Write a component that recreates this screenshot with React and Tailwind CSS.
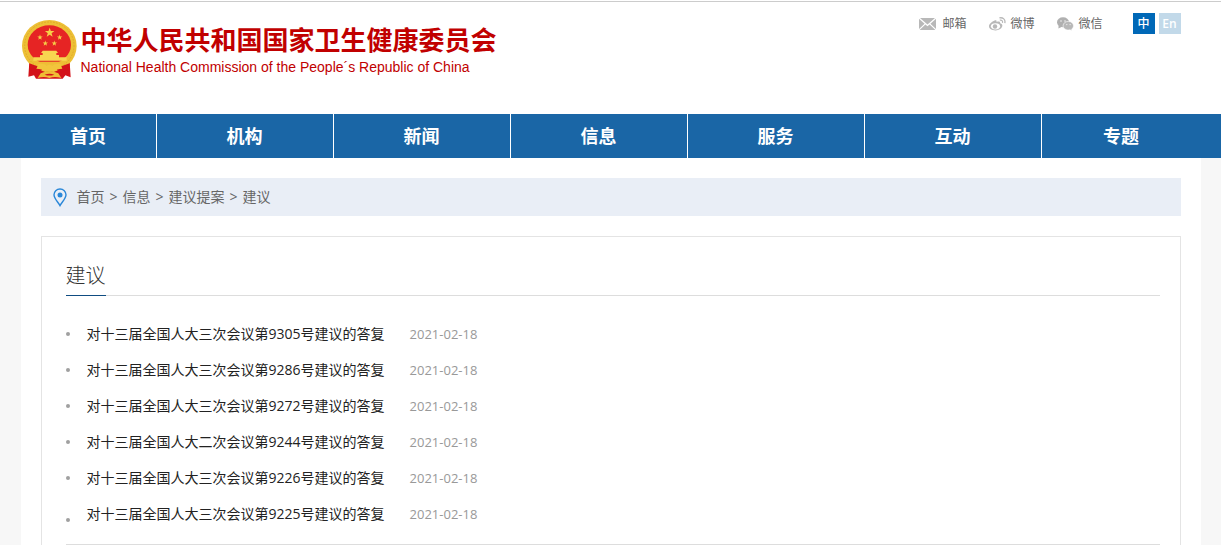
const NAV_ITEMS = ["首页", "机构", "新闻", "信息", "服务", "互动", "专题"];

const CRUMBS = ["首页", "信息", "建议提案", "建议"];

const ARTICLES = [
  { title: "对十三届全国人大三次会议第9305号建议的答复", date: "2021-02-18" },
  { title: "对十三届全国人大三次会议第9286号建议的答复", date: "2021-02-18" },
  { title: "对十三届全国人大三次会议第9272号建议的答复", date: "2021-02-18" },
  { title: "对十三届全国人大二次会议第9244号建议的答复", date: "2021-02-18" },
  { title: "对十三届全国人大三次会议第9226号建议的答复", date: "2021-02-18" },
  { title: "对十三届全国人大三次会议第9225号建议的答复", date: "2021-02-18" },
];

const STAR = "M0 -10 L2.4 -3.2 L9.5 -3.1 L3.8 1.2 L5.9 8.1 L0 4 L-5.9 8.1 L-3.8 1.2 L-9.5 -3.1 L-2.4 -3.2 Z";

function Emblem() {
  return (
    <svg viewBox="0 0 165 177" className="h-[59px] w-[55px] shrink-0" aria-hidden="true">
      {/* ribbons */}
      <path d="M22 126 L54 140 L82 146 L110 140 L143 126 L146 172 L130 166 L122 176 L42 176 L36 166 L19 170 Z" fill="#d3121a" />
      {/* wreath */}
      <ellipse cx="82" cy="78" rx="82" ry="78" fill="#edc036" />
      <ellipse cx="82" cy="77" rx="74" ry="71" fill="none" stroke="#e2a928" strokeWidth="3" strokeDasharray="5 4" />
      <ellipse cx="82" cy="74" rx="65" ry="58" fill="#e62424" />
      {/* stars */}
      <g fill="#f6cf48">
        <path d={STAR} transform="translate(83 38) scale(1.5)" />
        <path d={STAR} transform="translate(54 52) scale(.85)" />
        <path d={STAR} transform="translate(113 52) scale(.85)" />
        <path d={STAR} transform="translate(70 70) scale(.85)" />
        <path d={STAR} transform="translate(97 70) scale(.85)" />
      </g>
      {/* gate */}
      <g fill="#f8d650">
        <path d="M62 92 H103 L108 99 H57 Z" />
        <path d="M62 99 H103 V105 H62 Z" />
        <path d="M54 105 H111 V112 H134 V122 H34 V112 H54 Z" />
      </g>
      <path d="M32 125 H133 L124 132 H41 Z" fill="#efbc35" />
      {/* ribbon folds over the wreath */}
      <path d="M22 130 L44 138 L62 146 L52 160 L24 148 Z" fill="#d3121a" />
      <path d="M143 130 L120 138 L103 146 L112 160 L141 148 Z" fill="#d3121a" />
      {/* gear and knot */}
      <path d="M50 132 Q68 130 74 138 Q82 130 91 138 Q97 130 115 132 L121 146 Q104 146 95 156 Q82 148 70 156 Q60 146 43 146 Z" fill="#f2c53c" />
      <path d="M56 160 Q82 148 109 160 L118 174 Q98 168 82 174 Q66 168 47 174 Z" fill="#efbd34" />
      <path d="M68 164 Q82 158 97 164 Q82 169 68 164 Z" fill="#d3121a" />
    </svg>
  );
}

function MailIcon() {
  return (
    <svg viewBox="0 0 17 12" className="h-3 w-[17px] fill-[#b8b8b8]" aria-hidden="true">
      <path d="M1 0 H16 L8.5 6.6 Z" />
      <path d="M0 .8 L5.6 5.8 L0 11 Z" />
      <path d="M17 .8 L11.4 5.8 L17 11 Z" />
      <path d="M6.4 6.5 L8.5 8.3 L10.6 6.5 L16.4 12 H.6 Z" />
    </svg>
  );
}

function WeiboIcon() {
  return (
    <svg viewBox="0 0 17 14" className="h-3.5 w-[17px]" aria-hidden="true">
      <path
        d="M5.6 3.6 C7 3 7.9 3.4 7.5 5 C9.6 4.2 11.5 4.3 11.1 6.3 C13 6.8 13.8 8 13.2 9.6 C12.3 12.2 9.4 13.5 6.4 13.4 C3 13.3 0 11.8 0 9.2 C0 7.2 2.9 4.6 5.6 3.6 Z"
        fill="#b8b8b8"
      />
      <ellipse cx="6.5" cy="9.3" rx="4.6" ry="3.1" fill="#fff" />
      <circle cx="6" cy="9.5" r="2.2" fill="#b8b8b8" />
      <path d="M10.4 .9 C14 .1 16.7 2.6 15.8 6.2" fill="none" stroke="#b8b8b8" strokeWidth="1.3" />
      <path d="M10.8 3.2 C12.7 2.8 14 4 13.5 5.8" fill="none" stroke="#b8b8b8" strokeWidth="1.2" />
    </svg>
  );
}

function WechatIcon() {
  return (
    <svg viewBox="0 0 17 14" className="h-3.5 w-[17px]" aria-hidden="true">
      <g fill="#b0b0b0">
        <ellipse cx="6" cy="5.2" rx="6" ry="5" />
        <path d="M1.6 8 L1.4 11.4 L5 9.8 Z" />
      </g>
      <g fill="#b8b8b8" stroke="#fff" strokeWidth=".6">
        <path d="M11.3 4.4 C14.3 4.4 16.5 6.3 16.5 8.7 C16.5 10.1 15.8 11.3 14.7 12 L15 13.8 L13 12.8 C9 13.6 6.1 11.5 6.1 8.7 C6.1 6.3 8.4 4.4 11.3 4.4 Z" />
      </g>
      <g fill="#eee">
        <circle cx="4" cy="4" r=".8" />
        <circle cx="8" cy="4" r=".8" />
        <circle cx="9.8" cy="7.6" r=".7" />
        <circle cx="13.1" cy="7.6" r=".7" />
      </g>
    </svg>
  );
}

function PinIcon() {
  return (
    <svg viewBox="0 0 14 19" className="h-[19px] w-3.5 shrink-0" aria-hidden="true">
      <path
        d="M7 1 C3.6 1 1 3.5 1 6.8 C1 10.5 5 14 7 17.6 C9 14 13 10.5 13 6.8 C13 3.5 10.4 1 7 1 Z"
        fill="none"
        stroke="#2a87d8"
        strokeWidth="1.4"
      />
      <circle cx="7" cy="7" r="2.5" fill="#2a87d8" />
    </svg>
  );
}

function Header() {
  return (
    <header className="mt-px border-t border-[#ccc] bg-white">
      <div className="mx-auto flex h-28 max-w-[1180px] items-start justify-between pr-5 pl-px">
        <a href="#" className="mt-[18px] flex items-start gap-1 text-[#c10000]">
          <Emblem />
          <span className="flex flex-col pt-1">
            <span className="text-[26px] leading-8 font-bold whitespace-nowrap">
              中华人民共和国国家卫生健康委员会
            </span>
            <span className="font-['Liberation_Sans',sans-serif] text-sm leading-[22px] whitespace-nowrap">
              National Health Commission of the People´s Republic of China
            </span>
          </span>
        </a>

        <div className="mt-[11px] flex items-center text-xs text-[#666]">
          <div className="mr-[30px] flex items-center gap-[23px]">
            <a href="#" className="flex items-center gap-1.5">
              <MailIcon />
              邮箱
            </a>
            <a href="#" className="flex items-center gap-1">
              <WeiboIcon />
              微博
            </a>
            <a href="#" className="flex items-center gap-1">
              <WechatIcon />
              微信
            </a>
          </div>
          <div className="flex gap-1 text-center leading-[21px] font-medium text-white">
            <a href="#" className="w-[22px] bg-[#0068b7]">中</a>
            <a href="#" className="w-[22px] bg-[#c2d9e9] font-semibold">En</a>
          </div>
        </div>
      </div>
    </header>
  );
}

function Nav() {
  return (
    <nav className="bg-[#1a66a6]">
      <ul className="mx-auto grid max-w-[1180px] grid-cols-[136fr_repeat(5,177fr)_159fr]">
        {NAV_ITEMS.map((item) => (
          <li key={item} className="border-r border-white last:border-r-0">
            <a href="#" className="block text-center text-lg leading-[44px] font-bold text-white">
              {item}
            </a>
          </li>
        ))}
      </ul>
    </nav>
  );
}

function Breadcrumb() {
  return (
    <div className="flex h-[38px] items-center bg-[#e9eef6] pl-3 text-sm text-[#666]">
      <PinIcon />
      <ol className="ml-2.5 flex">
        {CRUMBS.map((crumb, i) => (
          <li key={crumb}>
            {i > 0 && <span className="mx-[5px]">&gt;</span>}
            <a href="#">{crumb}</a>
          </li>
        ))}
      </ol>
    </div>
  );
}

export default function App() {
  return (
    <div className="flex min-h-screen flex-col bg-white font-['Open_Sans','Noto_Sans_CJK_SC',sans-serif]">
      <Header />
      <Nav />
      <div className="flex flex-1 flex-col bg-[#f7f7f7]">
        <main className="mx-auto flex w-full max-w-[1180px] flex-1 flex-col gap-5 bg-white px-5 pt-5">
          <Breadcrumb />
          <section className="flex-1 border border-b-0 border-[#e4e4e4] pt-5 pr-5 pl-6">
            <div className="flex border-b border-[#ddd]">
              <h2 className="-mb-px border-b border-[#0f4c81] text-xl leading-[38px] font-light text-[#333]">
                建议
              </h2>
            </div>
            <ul className="mt-5 border-b border-[#ddd]">
              {ARTICLES.map((article) => (
                <li key={article.title} className="flex h-9 items-start leading-9 last:h-12">
                  <span className="size-1 shrink-0 self-center rounded-full bg-[#a0a0a0]" />
                  <a href="#" className="ml-[17px] text-sm leading-9 text-[#222]">{article.title}</a>
                  <span className="ml-[25px] text-[13px] leading-9 text-[#999]">{article.date}</span>
                </li>
              ))}
            </ul>
          </section>
        </main>
      </div>
    </div>
  );
}
